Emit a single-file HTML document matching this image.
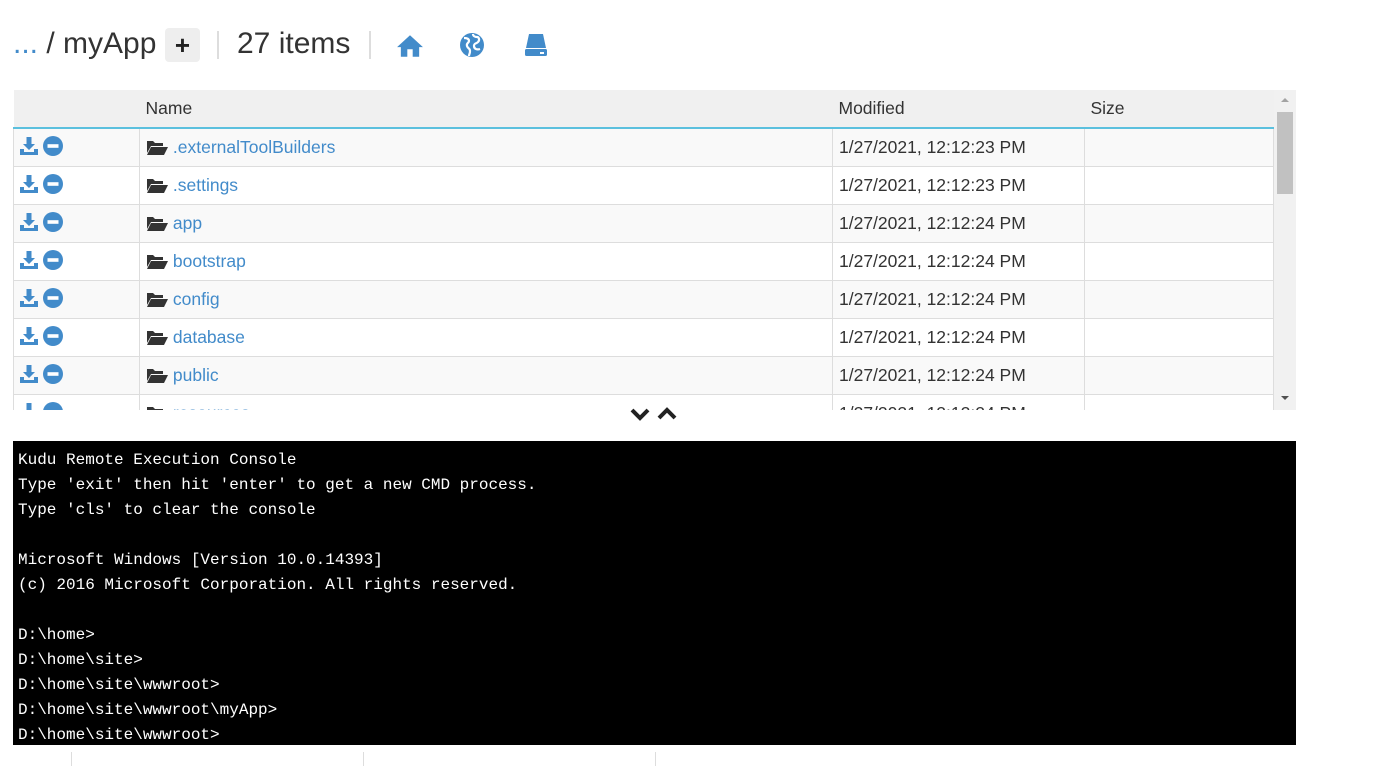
<!DOCTYPE html>
<html><head><style>
body{margin:0;background:#fff;font-family:"Liberation Sans",sans-serif;width:1389px;height:766px;overflow:hidden;position:relative}
.top{position:absolute;top:26px;left:13px;font-size:30px;color:#333;height:38px;line-height:36px}
.top a{color:#428bca}
.ab{position:absolute}
.plus{position:absolute;left:152px;top:2px;width:35px;height:34px;background:#eee;border-radius:4px;text-align:center;line-height:34px;font-weight:bold;font-size:26px;color:#222}
.sep{position:absolute;width:2px;height:28px;background:#ddd;top:5px}
.tbl{position:absolute;left:13px;top:90px;width:1261px;height:320px;overflow:hidden}
table{border-collapse:collapse;width:1261px;font-size:17.5px}
th{background:#f0f0f0;text-align:left;font-weight:normal;height:37px;border-bottom:2px solid #5bc0de;padding:0 6px;color:#333}
td{height:37px;border:1px solid #ddd;padding:0 6px;color:#333}
tr:nth-child(odd) td{background:#f9f9f9}
td a{color:#428bca}
.sb{position:absolute;left:1274px;top:90px;width:22px;height:320px;background:#f1f1f1}
.con{position:absolute;left:13px;top:441px;width:1283px;height:304px;background:#000;color:#fff;font-family:"Liberation Mono",monospace;font-size:16px;line-height:25px;padding:7px 5px;box-sizing:border-box;white-space:pre}
</style></head><body>
<div class="top"><span class="ab" style="left:0;white-space:nowrap"><a>...</a> / myApp</span><span class="plus">+</span><span class="sep" style="left:204px"></span><span class="ab" style="left:224px;white-space:nowrap">27 items</span><span class="sep" style="left:356px"></span>
<svg class="ab" style="left:383px;top:6px" width="28" height="28" viewBox="0 0 26 26"><path d="M13 3L1 14h3.5v9h6v-7h5v7h6v-9H25z" fill="#428bca"/></svg>
<svg class="ab" style="left:446px;top:6px" width="26" height="26" viewBox="0 0 26 26"><circle cx="13" cy="13" r="12" fill="#428bca"/><path d="M5 6c3 0 5 1 5 3s-3 2-2 5 3 2 3 5-1 3-1 5M14 2c0 2 2 3 4 3s3 3 1 5-4 1-4 4 3 4 6 3" stroke="#fff" stroke-width="2.2" fill="none"/></svg>
<svg class="ab" style="left:510px;top:6px" width="26" height="26" viewBox="0 0 26 26"><path d="M6 2h14l3 14H3z" fill="#428bca"/><rect x="2" y="17" width="22" height="7" rx="1.5" fill="#428bca"/><rect x="17" y="20" width="4" height="2" fill="#fff"/></svg>
</div>
<div class="tbl"><table>
<tr><th style="width:114px"></th><th style="width:681px">Name</th><th style="width:240px">Modified</th><th>Size</th></tr>
<tbody id="b"></tbody>
</table></div>
<div class="sb"><div style="position:absolute;left:3px;top:22px;width:16px;height:82px;background:#c1c1c1"></div><div style="position:absolute;left:7px;top:8px;border:4px solid transparent;border-bottom-color:#a3a3a3;border-top:0"></div><div style="position:absolute;left:7px;top:306px;border:4px solid transparent;border-top-color:#505050;border-bottom:0"></div></div>
<svg style="position:absolute;left:629px;top:405px" width="54" height="18" viewBox="0 0 54 18"><path d="M3 5l8 8 8-8" stroke="#222" stroke-width="4" fill="none"/><path d="M30 13l8-8 8 8" stroke="#222" stroke-width="4" fill="none"/></svg>
<div class="con">Kudu Remote Execution Console
Type 'exit' then hit 'enter' to get a new CMD process.
Type 'cls' to clear the console

Microsoft Windows [Version 10.0.14393]
(c) 2016 Microsoft Corporation. All rights reserved.

D:\home>
D:\home\site>
D:\home\site\wwwroot>
D:\home\site\wwwroot\myApp>
D:\home\site\wwwroot></div>
<div style="position:absolute;top:752px;left:71px;width:1px;height:14px;background:#ddd"></div>
<div style="position:absolute;top:752px;left:363px;width:1px;height:14px;background:#ddd"></div>
<div style="position:absolute;top:752px;left:655px;width:1px;height:14px;background:#ddd"></div>
<script>
var n=[".externalToolBuilders",".settings","app","bootstrap","config","database","public","resources"],t=["12:12:23","12:12:23","12:12:24","12:12:24","12:12:24","12:12:24","12:12:24","12:12:24"],h="";
var ic='<svg width="18" height="20" viewBox="0 0 18 20" style="vertical-align:-2px"><path d="M6.5 1h5v7h3.5l-6 6-6-6h3.5z M0 13h4v3h10v-3h4v6H0z" fill="#428bca"/></svg> <svg width="20" height="20" viewBox="0 0 20 20" style="vertical-align:-2px"><circle cx="10" cy="10" r="10" fill="#428bca"/><rect x="4.5" y="8.2" width="11" height="3.6" fill="#fff"/></svg>';
var fo='<svg width="22" height="16" viewBox="0 0 22 16" style="vertical-align:-2px"><path d="M1 2h6l2 2h8v3H5L1 14z M5 8h17l-4 8H1z" fill="#333"/></svg> ';
for(var i=0;i<8;i++)h+='<tr><td>'+ic+'</td><td>'+fo+'<a>'+n[i]+'</a></td><td>1/27/2021, '+t[i]+' PM</td><td></td></tr>';
document.getElementById('b').innerHTML=h;
</script>
</body></html>
